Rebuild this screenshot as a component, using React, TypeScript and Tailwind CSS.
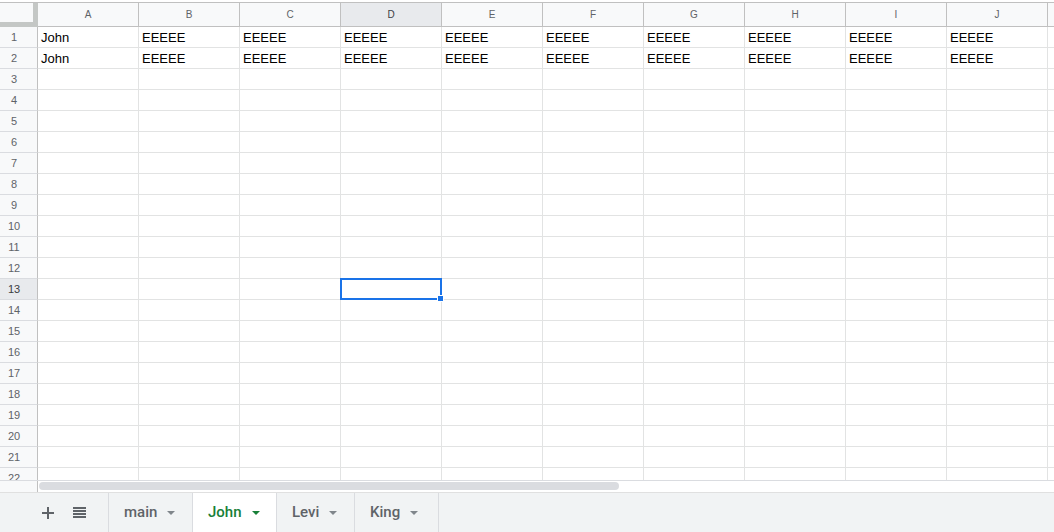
import React from 'react';

const cols = ['A', 'B', 'C', 'D', 'E', 'F', 'G', 'H', 'I', 'J', 'K'];
const rows = Array.from({ length: 22 }, (_, i) => i + 1);

const filled = ['John', 'EEEEE', 'EEEEE', 'EEEEE', 'EEEEE', 'EEEEE', 'EEEEE', 'EEEEE', 'EEEEE', 'EEEEE', ''];
const data: Record<number, string[]> = { 1: filled, 2: filled };

const selCol = 3;
const selRow = 13;

const tabs = [
    { name: 'main', w: 'w-[84px]', active: false },
    { name: 'John', w: 'w-[84px]', active: true },
    { name: 'Levi', w: 'w-[78px]', active: false },
    { name: 'King', w: 'w-[84px]', active: false },
];

const Caret = ({ color }: { color: string }) => (
    <svg width="8" height="4" viewBox="0 0 8 4" className="shrink-0">
        <path d="M0 0h8L4 4z" fill={color} />
    </svg>
);

export default function App() {
    return (
        <div className="w-[1054px] h-[532px] overflow-hidden bg-white flex flex-col pt-[2px] font-['Liberation_Sans',Arial,sans-serif]">
            {/* column headers */}
            <div className="h-[25px] shrink-0 flex border-t border-[#c0c0c0] overflow-hidden">
                <div className="w-[38px] shrink-0 h-full bg-[#f8f9fa] border-r-[5px] border-b-[5px] border-[#c4c7c5]" />
                {cols.map((c, i) => (
                    <div
                        key={c}
                        className={`w-[101px] shrink-0 h-full flex items-center justify-center border-r border-b border-[#c0c0c0] text-[10px] ${i === selCol ? 'bg-[#e8eaed] text-[#3c4043]' : 'bg-[#f8f9fa] text-[#5f6368]'}`}
                    >
                        {c}
                    </div>
                ))}
            </div>

            {/* grid body */}
            <div className="h-[453px] shrink-0 overflow-hidden">
                {rows.map((r) => (
                    <div key={r} className="h-[21px] flex">
                        <div
                            className={`w-[38px] shrink-0 h-full flex items-center justify-center pr-[9px] border-r border-b border-r-[#c0c0c0] border-b-[#dadce0] text-[11px] ${r === selRow ? 'bg-[#e8eaed] text-[#3c4043]' : 'bg-[#f8f9fa] text-[#5f6368]'}`}
                        >
                            {r}
                        </div>
                        {cols.map((c, i) => (
                            <div
                                key={c}
                                className="relative w-[101px] shrink-0 h-full flex items-center pt-[2px] px-[3px] border-r border-b border-[#e2e3e3] text-[13px] text-black whitespace-nowrap"
                            >
                                {data[r]?.[i] ?? ''}
                                {r === selRow && i === selCol && (
                                    <>
                                        <div className="absolute -left-px -top-px w-[102px] h-[22px] border-2 border-[#1a73e8] z-10" />
                                        <div className="absolute left-[96px] top-[16px] w-[7px] h-[7px] bg-[#1a73e8] border border-white z-20" />
                                    </>
                                )}
                            </div>
                        ))}
                    </div>
                ))}
            </div>

            {/* horizontal scrollbar */}
            <div className="h-[12px] shrink-0 flex border-t border-[#dadce0]">
                <div className="w-[38px] shrink-0 h-full bg-[#f8f9fa] border-r border-[#c0c0c0]" />
                <div className="ml-px mt-px w-[580px] h-[8px] rounded-full bg-[#dadce0]" />
            </div>

            {/* sheet tabs */}
            <div className="h-[40px] shrink-0 flex bg-[#f1f3f4] border-t border-[#e0e0e0] font-['Roboto',Arial,sans-serif]">
                <div className="w-[108px] shrink-0 flex items-center pl-[42px] gap-[19px]">
                    <svg width="12" height="12" viewBox="0 0 12 12">
                        <path d="M5 0h2v5h5v2H7v5H5V7H0V5h5z" fill="#5f6368" />
                    </svg>
                    <svg width="13" height="11" viewBox="0 0 13 11">
                        <path d="M0 0h13v2H0zM0 3h13v2H0zM0 6h13v2H0zM0 9h13v2H0z" fill="#5f6368" />
                    </svg>
                </div>
                {tabs.map((t) => (
                    <div
                        key={t.name}
                        className={`${t.w} shrink-0 h-full flex items-center gap-[10px] pl-[15px] border-l border-[#dadce0] text-[15px] font-medium ${t.active ? 'bg-white text-[#188038]' : 'text-[#5f6368]'}`}
                    >
                        <span>{t.name}</span>
                        <Caret color={t.active ? '#188038' : '#80868b'} />
                    </div>
                ))}
                <div className="border-l border-[#dadce0]" />
            </div>
        </div>
    );
}
